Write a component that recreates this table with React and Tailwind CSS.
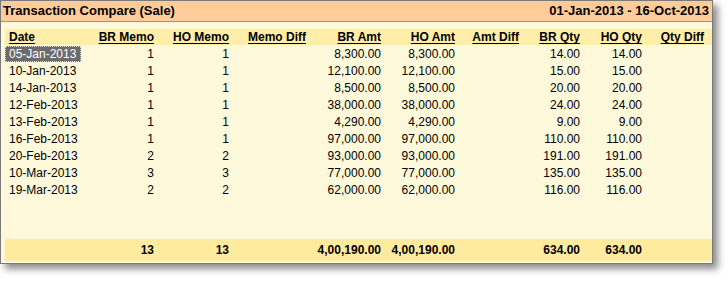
import React from 'react';

const rows = [
  ['05-Jan-2013', '1', '1', '', '8,300.00', '8,300.00', '', '14.00', '14.00', ''],
  ['10-Jan-2013', '1', '1', '', '12,100.00', '12,100.00', '', '15.00', '15.00', ''],
  ['14-Jan-2013', '1', '1', '', '8,500.00', '8,500.00', '', '20.00', '20.00', ''],
  ['12-Feb-2013', '1', '1', '', '38,000.00', '38,000.00', '', '24.00', '24.00', ''],
  ['13-Feb-2013', '1', '1', '', '4,290.00', '4,290.00', '', '9.00', '9.00', ''],
  ['16-Feb-2013', '1', '1', '', '97,000.00', '97,000.00', '', '110.00', '110.00', ''],
  ['20-Feb-2013', '2', '2', '', '93,000.00', '93,000.00', '', '191.00', '191.00', ''],
  ['10-Mar-2013', '3', '3', '', '77,000.00', '77,000.00', '', '135.00', '135.00', ''],
  ['19-Mar-2013', '2', '2', '', '62,000.00', '62,000.00', '', '116.00', '116.00', ''],
];

const headers = ['Date', 'BR Memo', 'HO Memo', 'Memo Diff', 'BR Amt', 'HO Amt', 'Amt Diff', 'BR Qty', 'HO Qty', 'Qty Diff'];
const totals = ['', '13', '13', '', '4,00,190.00', '4,00,190.00', '', '634.00', '634.00', ''];

const grid = 'grid grid-cols-[80px_71px_75px_77px_75px_74px_64px_61px_62px_62px]';

export default function App() {
  return (
    <div className="w-[728px] h-[281px] bg-white font-['Liberation_Sans',Arial,sans-serif] text-black">
      <div className="w-[713px] h-[264px] flex flex-col border border-[#7a7a7a] bg-[#fff9dc] shadow-[5px_5px_7px_rgba(0,0,0,0.45)]">
        {/* Title bar */}
        <div className="h-[21px] flex items-center justify-between px-[2px] bg-[#ffcc99] border-b border-[#b09070] text-[13px] font-bold">
          <span>Transaction Compare (Sale)</span>
          <span className="pr-[1px]">01-Jan-2013 - 16-Oct-2013</span>
        </div>

        {/* Table */}
        <div className="flex-1 pt-[7px] pl-[4px]">
          <div className={`${grid} h-[16px] items-center bg-[#ffeeaa] text-[12px] font-bold leading-none`}>
            {headers.map((h, i) => (
              <div key={h} className={i === 0 ? 'pl-[4px]' : 'text-right pr-[2px]'}>
                <span className="underline underline-offset-[2px]">{h}</span>
              </div>
            ))}
          </div>
          {rows.map((r, ri) => (
            <div key={ri} className={`${grid} h-[17px] items-center text-[12px] leading-none`}>
              {r.map((c, i) =>
                i === 0 ? (
                  <div key={i} className="h-[17px] flex items-center">
                    <span
                      className={
                        ri === 0
                          ? 'h-[16px] w-[76px] flex items-center pl-[3px] bg-[#6b6b6b] text-white border border-dotted border-[#d8d8d8]'
                          : 'pl-[4px]'
                      }
                    >
                      {c}
                    </span>
                  </div>
                ) : (
                  <div key={i} className="text-right pr-[2px]">{c}</div>
                )
              )}
            </div>
          ))}
        </div>

        {/* Totals */}
        <div className="pl-[4px] pb-[2px]">
          <div className={`${grid} h-[22px] items-center bg-[#ffeb9e] text-[12px] font-bold leading-none`}>
            {totals.map((t, i) => (
              <div key={i} className="text-right pr-[2px]">{t}</div>
            ))}
          </div>
        </div>
      </div>
    </div>
  );
}
